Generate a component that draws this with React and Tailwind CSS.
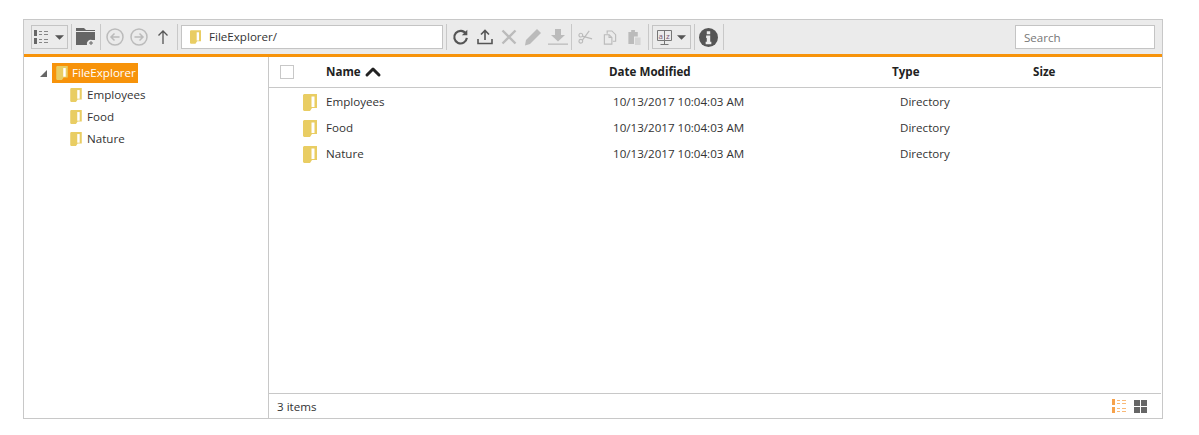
import React from "react";
import { ChevronUp } from "lucide-react";

const Sep = () => <div className="w-px h-[26px] bg-[#c8c8c8] shrink-0" />;

const FolderIcon = ({ className }) => (
  <svg viewBox="0 0 14 17" className={className}>
    <path d="M0 1 L1 0 H14 V14 H9 L7 17 H1 L0 16 Z" fill="#e9cd63" />
    <path d="M8.5 2.5 H11.5 V13 H8.5 Z" fill="#fff" />
  </svg>
);

const Caret = () => (
  <svg viewBox="0 0 10 5" className="w-[9px] h-[5px] shrink-0"><path d="M0 0h10L5 5z" fill="#555" /></svg>
);

const ListIcon = ({ className, color = "#666" }) => (
  <svg viewBox="0 0 14 14" className={className}>
    <path d="M0 0h3v6H0zM0 8h3v6H0z" fill={color} />
    <path d="M5 1h3v1H5zM10 1h4v1h-4zM5 4h3v1H5zM10 4h4v1h-4zM5 9h3v1H5zM10 9h4v1h-4zM5 12h3v1H5zM10 12h4v1h-4z" fill={color} opacity="0.75" />
  </svg>
);

const rows = ["Employees", "Food", "Nature"];

export default function App() {
  return (
    <div className="w-[1199px] h-[435px] bg-white pt-[19px] pl-[23px] font-['Open_Sans',sans-serif] text-[11.6px] text-[#333]">
      <div className="w-[1140px] h-[400px] border border-[#c8c8c8] flex flex-col">
        {/* Toolbar */}
        <div className="h-[34px] bg-[#ebebeb] border-b-[3px] border-[#f7930a] box-content flex items-center pl-[7px] shrink-0">
          <div className="w-[37px] h-[24px] border border-[#c4c4c4] flex items-center pl-[2px] gap-[7px] shrink-0">
            <ListIcon className="w-[14px] h-[14px]" />
            <Caret />
          </div>
          <div className="ml-[3px]"><Sep /></div>
          {/* new folder */}
          <svg viewBox="0 0 20 18" className="w-[20px] h-[18px] ml-[4px] shrink-0">
            <path d="M0 0h8l2 2h9v15H0z" fill="#666" />
            <path d="M0 3h19v1H0z" fill="#ebebeb" />
            <path d="M11 17a4 4 0 0 1 5-5h3v6h-8z" fill="#ebebeb" />
            <path d="M15 13v4M13 15h4" stroke="#666" strokeWidth="1" />
          </svg>
          <div className="ml-[4px]"><Sep /></div>
          <svg viewBox="0 0 18 18" className="w-[18px] h-[18px] ml-[5px] shrink-0" fill="none" stroke="#bbb" strokeWidth="1.5">
            <circle cx="9" cy="9" r="8" />
            <path d="M13.5 9H5M8.5 5.5 5 9l3.5 3.5" />
          </svg>
          <svg viewBox="0 0 18 18" className="w-[18px] h-[18px] ml-[6px] shrink-0" fill="none" stroke="#bbb" strokeWidth="1.5">
            <circle cx="9" cy="9" r="8" />
            <path d="M4.5 9H13M9.5 5.5 13 9l-3.5 3.5" />
          </svg>
          <svg viewBox="0 0 12 14" className="w-[12px] h-[14px] ml-[9px] shrink-0" fill="none" stroke="#555" strokeWidth="1.3">
            <path d="M6 14V1M1.5 5.5 6 1l4.5 4.5" />
          </svg>
          <div className="ml-[8px]"><Sep /></div>
          <div className="ml-[3px] w-[262px] h-[24px] bg-white border border-[#c4c4c4] flex items-center pl-[8px] gap-[8px] shrink-0">
            <FolderIcon className="w-[11px] h-[14px]" />
            <span>FileExplorer/</span>
          </div>
          <div className="ml-[3px]"><Sep /></div>
          <svg viewBox="0 0 20 20" className="w-[18px] h-[18px] ml-[5px] shrink-0" fill="none" stroke="#555" strokeWidth="2.4">
            <path d="M15.5 6.5A7 7 0 1 0 16.5 11" />
            <path d="M17 2v6h-6z" fill="#555" stroke="none" />
          </svg>
          <svg viewBox="0 0 16 16" className="w-[16px] h-[16px] ml-[7px] shrink-0" fill="none" stroke="#555" strokeWidth="1.6">
            <path d="M8 11V2M4 5.5 8 1.5l4 4" />
            <path d="M1 10v4.5h14V10" />
          </svg>
          <svg viewBox="0 0 16 16" className="w-[16px] h-[16px] ml-[8px] shrink-0" fill="none" stroke="#bbb" strokeWidth="2.4">
            <path d="M1.5 1.5l13 13M14.5 1.5l-13 13" />
          </svg>
          <svg viewBox="0 0 18 18" className="w-[18px] h-[18px] ml-[7px] shrink-0">
            <path d="M13 1l4 4L6 16l-5 1.5L2 12z" fill="#bbb" />
          </svg>
          <svg viewBox="0 0 20 16" className="w-[20px] h-[16px] ml-[6px] shrink-0">
            <path d="M7 0h6v6h4l-7 6.5L3 6h4z" fill="#bbb" />
            <path d="M0 14.5h20v1.3H0z" fill="#bbb" />
          </svg>
          <div className="ml-[3px]"><Sep /></div>
          <svg viewBox="0 0 16 16" className="w-[15px] h-[15px] ml-[6px] shrink-0" fill="none" stroke="#bbb" strokeWidth="1.2">
            <circle cx="3" cy="5.5" r="2" />
            <circle cx="3" cy="12" r="2" />
            <path d="M4.5 6.5 15 9.5M4.5 11 12 1" />
          </svg>
          <svg viewBox="0 0 14 16" className="w-[14px] h-[15px] ml-[10px] shrink-0" fill="none" stroke="#bbb" strokeWidth="1.2">
            <path d="M4 4V1h5l4 4v7h-3" />
            <path d="M1 5h5l3 3v7H1z" />
            <path d="M6 5v3h3" />
          </svg>
          <svg viewBox="0 0 14 16" className="w-[14px] h-[15px] ml-[10px] shrink-0">
            <path d="M1 2h3V0h4v2h3v5H7v8H1z" fill="#bbb" />
            <path d="M8 8h6v8H8z" fill="#d5d5d5" />
          </svg>
          <div className="ml-[7px]"><Sep /></div>
          <div className="ml-[3px] w-[39px] h-[24px] border border-[#c4c4c4] flex items-center pl-[4px] gap-[5px] shrink-0">
            <svg viewBox="0 0 15 15" className="w-[15px] h-[15px] shrink-0">
              <path d="M.5.5h14v10H.5z" fill="none" stroke="#777" />
              <path d="M7.5 .5V14M3.5 14.5h8" stroke="#777" fill="none" />
              <text x="1.5" y="8.5" fontSize="8" fill="#7b5a72">a</text>
              <text x="9" y="8.5" fontSize="8" fill="#7b5a72">z</text>
            </svg>
            <Caret />
          </div>
          <div className="ml-[3px]"><Sep /></div>
          <svg viewBox="0 0 20 20" className="w-[19px] h-[19px] ml-[4px] shrink-0">
            <circle cx="10" cy="10" r="10" fill="#555" />
            <path d="M8.2 3.5h3.6v3H8.2zM7.5 8h4.3v6.5h1.2V17H7v-2.5h1.2v-4H7.5z" fill="#ebebeb" />
          </svg>
          <div className="ml-[5px]"><Sep /></div>
          <input
            readOnly
            placeholder="Search"
            className="ml-auto mr-[7px] w-[140px] h-[24px] bg-white border border-[#c4c4c4] px-[8px] outline-none placeholder:text-[#777] shrink-0"
          />
        </div>

        {/* Body */}
        <div className="flex flex-1 min-h-0">
          {/* Tree */}
          <div className="w-[245px] border-r border-[#c8c8c8] shrink-0 pt-[6px] pl-[16px]">
            <div className="flex items-center h-[20px] mb-[1px]">
              <svg viewBox="0 0 7 7" className="w-[7px] h-[7px]"><path d="M7 0v7H0z" fill="#666" /></svg>
              <div className="ml-[5px] h-[20px] w-[86px] bg-[#f7930a] text-white flex items-center pl-[4px] gap-[4px]">
                <FolderIcon className="w-[12px] h-[14px]" />
                <span>FileExplorer</span>
              </div>
            </div>
            {rows.map((name) => (
              <div key={name} className="flex items-center h-[22px] pl-[30px] gap-[5px]">
                <FolderIcon className="w-[12px] h-[14px]" />
                <span>{name}</span>
              </div>
            ))}
          </div>

          {/* List */}
          <div className="flex-1 flex flex-col min-w-0">
            <div className="h-[31px] border-b border-[#c8c8c8] mr-[1px] flex items-center font-bold text-[#222] shrink-0">
              <div className="w-[14px] h-[14px] border border-[#c8c8c8] ml-[11px] mr-[32px] shrink-0" />
              <div className="w-[283px] flex items-center">
                Name
                <ChevronUp className="w-[24px] h-[24px] text-[#222]" strokeWidth={3} />
              </div>
              <div className="w-[283px]">Date Modified</div>
              <div className="w-[141px]">Type</div>
              <div>Size</div>
            </div>
            <div className="flex-1 pt-[1px]">
              {rows.map((name) => (
                <div key={name} className="flex items-center h-[26px]">
                  <FolderIcon className="w-[14px] h-[17px] ml-[34px] mr-[9px] shrink-0" />
                  <div className="w-[287px]">{name}</div>
                  <div className="w-[287px]">10/13/2017 10:04:03 AM</div>
                  <div>Directory</div>
                </div>
              ))}
            </div>
            <div className="h-[25px] border-t border-[#c8c8c8] flex items-center pl-[8px] mr-[1px] shrink-0">
              <span className="pt-[1px]">3 items</span>
              <ListIcon className="w-[14px] h-[14px] ml-auto" color="#f7a24a" />
              <svg viewBox="0 0 13 13" className="w-[13px] h-[13px] ml-[8px] mr-[14px]">
                <path d="M0 0h6v6H0zM7 0h6v6H7zM0 7h6v6H0zM7 7h6v6H7z" fill="#666" />
              </svg>
            </div>
          </div>
        </div>
      </div>
    </div>
  );
}
